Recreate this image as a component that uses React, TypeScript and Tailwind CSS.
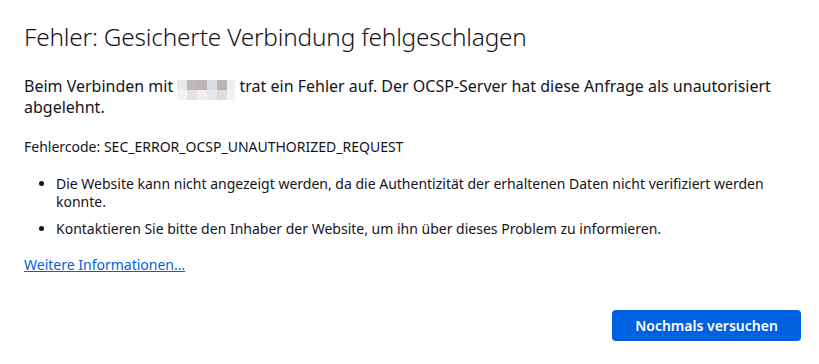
import React from "react";

const blur = [
  ["bg-[#e9e9eb]", "bg-[#bdb9b9]", "bg-[#bab6b6]", "bg-[#d8dce3]", "bg-[#b9b5b5]", "bg-[#eeeef0]"],
  ["bg-[#f3f3f4]", "bg-[#e3e1e1]", "bg-[#f0efef]", "bg-[#e6e7ea]", "bg-[#dedcdc]", "bg-[#f1f1f3]"],
];

function BlurredHost() {
  return (
    <span className="inline-flex flex-col align-top relative top-[4px]">
      {blur.map((row, i) => (
        <span key={i} className="flex">
          {row.map((c, j) => (
            <span key={j} className={`h-[10px] ${j === 5 ? "w-[8px]" : "w-[10px]"} ${c}`} />
          ))}
        </span>
      ))}
    </span>
  );
}

export default function App() {
  return (
    <div className="w-[819px] h-[364px] bg-white text-[#15141a] font-['Noto_Sans',sans-serif] pl-6 pr-[18px] pt-[20px]">
      <h1 className="text-[24.4px] font-light leading-[34px] tracking-[-0.2px]">
        Fehler: Gesicherte Verbindung fehlgeschlagen
      </h1>

      <p className="mt-[22px] text-[16px] leading-[21px]">
        Beim Verbinden mit <BlurredHost /> trat ein Fehler auf. Der OCSP-Server hat diese Anfrage als unautorisiert abgelehnt.
      </p>

      <p className="mt-[20px] text-[14px] leading-[18px]">
        Fehlercode: SEC_ERROR_OCSP_UNAUTHORIZED_REQUEST
      </p>

      <ul className="mt-[19px] pl-[32px] text-[14px] leading-[18px] list-disc">
        <li className="mb-[9px]">
          Die Website kann nicht angezeigt werden, da die Authentizität der erhaltenen Daten nicht verifiziert werden konnte.
        </li>
        <li>
          Kontaktieren Sie bitte den Inhaber der Website, um ihn über dieses Problem zu informieren.
        </li>
      </ul>

      <a href="#" className="block mt-[18px] w-fit text-[14px] leading-[18px] text-[#0061e0] underline">
        Weitere Informationen…
      </a>

      <div className="flex justify-end mt-[36px]">
        <button className="h-[31px] w-[189px] rounded-[4px] bg-[#0061e0] text-white text-[14px] font-semibold">
          Nochmals versuchen
        </button>
      </div>
    </div>
  );
}
